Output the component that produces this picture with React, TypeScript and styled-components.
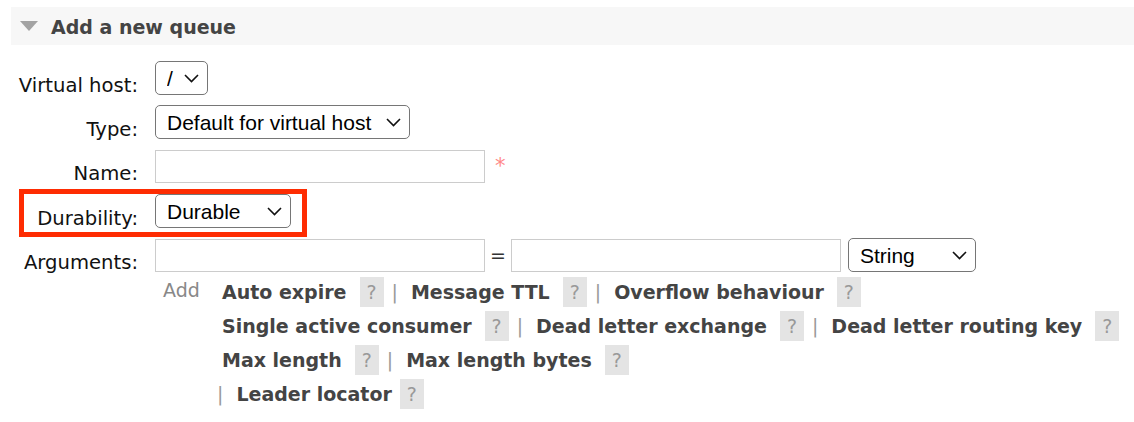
import React from "react";
import styled, { createGlobalStyle } from "styled-components";

const GlobalStyle = createGlobalStyle`
  html, body { margin: 0; padding: 0; background: #fff; }
  body {
    font-family: "DejaVu Sans", Verdana, sans-serif;
    font-size: 19px;
    color: #111;
  }
`;

const Page = styled.div`
  padding: 7px 0 0 11px;
`;

const SectionHeader = styled.div`
  display: flex;
  align-items: center;
  gap: 13px;
  height: 38px;
  padding-left: 9px;
  background: #f7f7f7;
`;

const Triangle = styled.svg`
  width: 18px;
  height: 10px;
  flex: none;
`;

const Title = styled.h2`
  margin: 0;
  padding-top: 2px;
  font-size: 19px;
  font-weight: bold;
  color: #444;
`;

const Form = styled.div`
  display: flex;
  flex-direction: column;
  gap: 10px;
  margin-top: 16px;
`;

const Row = styled.div<{ $height?: number }>`
  position: relative;
  display: grid;
  grid-template-columns: 127px auto;
  column-gap: 17px;
  align-items: start;
  min-height: ${(p) => p.$height ?? 34}px;
`;

const Label = styled.label<{ $height?: number }>`
  display: flex;
  align-items: center;
  justify-content: flex-end;
  height: ${(p) => p.$height ?? 34}px;
  padding-top: 14px;
  box-sizing: border-box;
  font-size: 19.6px;
  white-space: nowrap;
`;

const Field = styled.div<{ $height?: number }>`
  display: flex;
  align-items: center;
  height: ${(p) => p.$height ?? 34}px;
`;

const SelectWrap = styled.div<{ $width: number }>`
  position: relative;
  flex: none;
  width: ${(p) => p.$width}px;
  height: 34px;
`;

const NativeSelect = styled.select`
  appearance: none;
  -webkit-appearance: none;
  box-sizing: border-box;
  width: 100%;
  height: 100%;
  margin: 0;
  padding: 0 28px 0 11px;
  border: 1px solid #767676;
  border-radius: 5px;
  background: #fff;
  color: #000;
  font-family: "Liberation Sans", Arial, sans-serif;
  font-size: 21px;
  outline: none;
`;

const Chevron = styled.svg`
  position: absolute;
  right: 9px;
  top: 50%;
  width: 15px;
  height: 9px;
  margin-top: -4px;
  pointer-events: none;
`;

const TextInput = styled.input`
  box-sizing: border-box;
  flex: none;
  width: 330px;
  height: 33px;
  margin: 0;
  padding: 0 6px;
  border: 1px solid #cccccc;
  border-radius: 0;
  background: #fff;
  font-family: "Liberation Sans", Arial, sans-serif;
  font-size: 19px;
  outline: none;
`;

const Required = styled.span`
  margin-left: 10px;
  color: #f88;
  font-size: 21px;
  line-height: 1;
`;

const Highlight = styled.div`
  position: absolute;
  left: 8px;
  top: -5px;
  width: 288px;
  height: 48px;
  box-sizing: border-box;
  border: 5px solid #fe2c02;
  pointer-events: none;
`;

const ArgsColumn = styled.div`
  display: flex;
  flex-direction: column;
`;

const Equals = styled.span`
  margin: 0 5px;
  color: #333;
`;

const TypeSelectSlot = styled.div`
  margin-left: 7px;
`;

const AddRow = styled.div`
  display: grid;
  grid-template-columns: 67px auto;
  margin-top: 3px;
`;

const AddLabel = styled.span`
  padding-left: 8px;
  line-height: 30px;
  color: #888;
`;

const Links = styled.div`
  display: flex;
  flex-direction: column;
`;

const Line = styled.div<{ $indent?: number }>`
  display: flex;
  align-items: center;
  height: 34px;
  margin-left: ${(p) => p.$indent ?? 0}px;
  white-space: nowrap;
`;

const LinkText = styled.span`
  font-weight: bold;
  color: #444;
  cursor: pointer;
`;

const Help = styled.span<{ $gap?: number }>`
  display: inline-flex;
  align-items: center;
  justify-content: center;
  width: 24px;
  height: 30px;
  margin-left: ${(p) => p.$gap ?? 13}px;
  background: #e4e4e4;
  color: #999;
`;

const Sep = styled.span`
  margin: 0 13px 0 8px;
  color: #999;
`;

type SelectProps = { width: number; value: string; options: string[] };

function Select({ width, value, options }: SelectProps) {
  return (
    <SelectWrap $width={width}>
      <NativeSelect defaultValue={value}>
        {options.map((o) => (
          <option key={o}>{o}</option>
        ))}
      </NativeSelect>
      <Chevron viewBox="0 0 15 9">
        <path d="M1 1 L7.5 7.5 L14 1" fill="none" stroke="#111" strokeWidth="1.6" />
      </Chevron>
    </SelectWrap>
  );
}

type Item = { name: string; gap?: number };

const lines: { indent?: number; lead?: boolean; items: Item[] }[] = [
  { items: [{ name: "Auto expire" }, { name: "Message TTL" }, { name: "Overflow behaviour" }] },
  {
    items: [
      { name: "Single active consumer" },
      { name: "Dead letter exchange" },
      { name: "Dead letter routing key" },
    ],
  },
  { items: [{ name: "Max length" }, { name: "Max length bytes" }] },
  { indent: -13, lead: true, items: [{ name: "Leader locator", gap: 8 }] },
];

export default function App() {
  return (
    <>
      <GlobalStyle />
      <Page>
        <SectionHeader>
          <Triangle viewBox="0 0 18 10">
            <path d="M0 0 H18 L9 10 Z" fill="#a3a3a3" />
          </Triangle>
          <Title>Add a new queue</Title>
        </SectionHeader>

        <Form>
          <Row>
            <Label>Virtual host:</Label>
            <Field>
              <Select width={53} value="/" options={["/"]} />
            </Field>
          </Row>
          <Row>
            <Label>Type:</Label>
            <Field>
              <Select
                width={255}
                value="Default for virtual host"
                options={["Default for virtual host", "Classic", "Quorum", "Stream"]}
              />
            </Field>
          </Row>
          <Row $height={35}>
            <Label $height={35}>Name:</Label>
            <Field $height={35}>
              <TextInput type="text" />
              <Required>*</Required>
            </Field>
          </Row>
          <Row>
            <Highlight />
            <Label>Durability:</Label>
            <Field>
              <Select width={136} value="Durable" options={["Durable", "Transient"]} />
            </Field>
          </Row>
          <Row>
            <Label>Arguments:</Label>
            <ArgsColumn>
              <Field>
                <TextInput type="text" />
                <Equals>=</Equals>
                <TextInput type="text" />
                <TypeSelectSlot>
                  <Select width={128} value="String" options={["String", "Number", "Boolean", "List"]} />
                </TypeSelectSlot>
              </Field>
              <AddRow>
                <AddLabel>Add</AddLabel>
                <Links>
                  {lines.map((line, li) => (
                    <Line key={li} $indent={line.indent}>
                      {line.lead && <Sep>|</Sep>}
                      {line.items.map((it, ii) => (
                        <React.Fragment key={it.name}>
                          {ii > 0 && <Sep>|</Sep>}
                          <LinkText>{it.name}</LinkText>
                          <Help $gap={it.gap}>?</Help>
                        </React.Fragment>
                      ))}
                    </Line>
                  ))}
                </Links>
              </AddRow>
            </ArgsColumn>
          </Row>
        </Form>
      </Page>
    </>
  );
}
